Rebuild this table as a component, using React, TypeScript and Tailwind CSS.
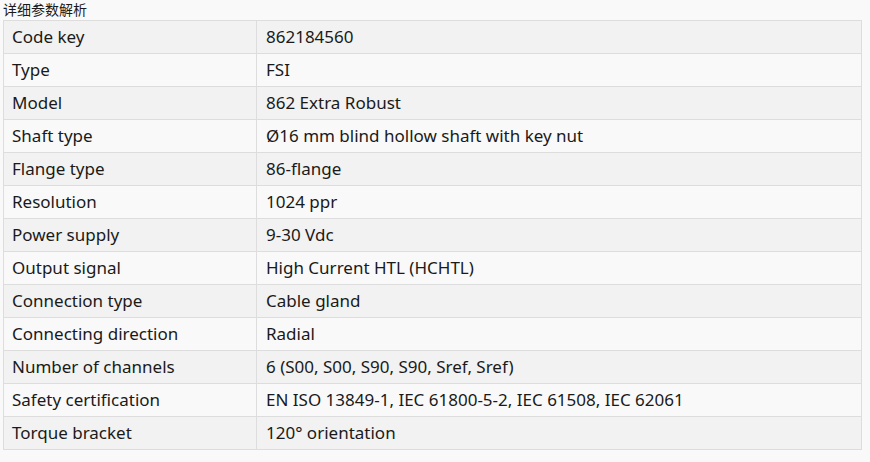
const rows: [string, string][] = [
  ["Code key", "862184560"],
  ["Type", "FSI"],
  ["Model", "862 Extra Robust"],
  ["Shaft type", "Ø16 mm blind hollow shaft with key nut"],
  ["Flange type", "86-flange"],
  ["Resolution", "1024 ppr"],
  ["Power supply", "9-30 Vdc"],
  ["Output signal", "High Current HTL (HCHTL)"],
  ["Connection type", "Cable gland"],
  ["Connecting direction", "Radial"],
  ["Number of channels", "6 (S00, S00, S90, S90, Sref, Sref)"],
  ["Safety certification", "EN ISO 13849-1, IEC 61800-5-2, IEC 61508, IEC 62061"],
  ["Torque bracket", "120° orientation"],
];

export default function App() {
  return (
    <main className="w-[870px] h-[462px] bg-[#f9f9f9] px-[3px] font-['Noto_Sans','Noto_Sans_CJK_SC',sans-serif] text-[#1a1a1a]">
      <h2 className="h-[20px] text-[14px] leading-[20px] pb-[2px]">详细参数解析</h2>
      <table className="w-[859px] border-collapse text-[17px]">
        <tbody>
          {rows.map(([k, v], i) => (
            <tr key={k} className={i % 2 === 0 ? "bg-[#f1f2f1]" : "bg-[#f9f9f9]"}>
              <td className="w-[253px] h-[33px] border border-[#dddddd] pl-[8px] pb-[2px] leading-none">{k}</td>
              <td className="h-[33px] border border-[#dddddd] pl-[9px] pb-[2px] leading-none">{v}</td>
            </tr>
          ))}
        </tbody>
      </table>
    </main>
  );
}
